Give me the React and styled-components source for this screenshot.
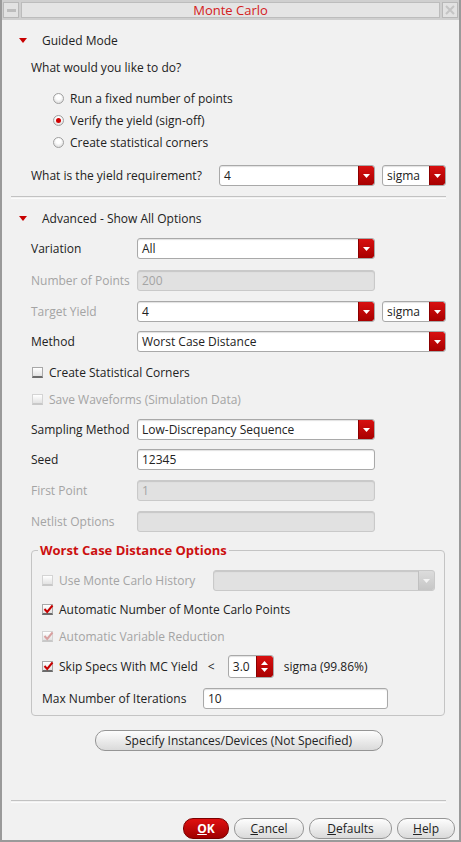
import React from 'react'
import styled, { createGlobalStyle } from 'styled-components'

const GlobalStyle = createGlobalStyle`
  html, body {
    margin: 0;
    padding: 0;
    background: #efefef;
  }
  body {
    font-family: "Open Sans", "DejaVu Sans", sans-serif;
    font-size: 12px;
    color: #222;
  }
`

const Window = styled.div`
  width: 461px;
  height: 842px;
  box-sizing: border-box;
  border: 1px solid #9a9a9a;
  border-width: 0 2px 2px 2px;
  background: #f1f1f1;
  display: flex;
  flex-direction: column;
  overflow: hidden;
`

const TitleBar = styled.div`
  height: 20px;
  flex: none;
  display: flex;
  align-items: stretch;
  gap: 2px;
  padding: 2px 1px 2px 1px;
  box-sizing: border-box;
  background: #cfcfcf;
`

const FrameButton = styled.div`
  width: 16px;
  box-sizing: border-box;
  border: 1px solid #b8b8b8;
  background: #e2e2e2;
  display: flex;
  align-items: center;
  justify-content: center;
`

const TitleText = styled.div`
  flex: 1;
  border: 1px solid #bcbcbc;
  background: #e4e4e4;
  color: #d42020;
  font-size: 13px;
  display: flex;
  align-items: center;
  justify-content: center;
  line-height: 1;
`

const Content = styled.div`
  flex: 1;
  display: flex;
  flex-direction: column;
  padding: 0 13px 0 9px;
`

const Row = styled.div`
  display: flex;
  align-items: center;
  height: ${p => p.$h || 21}px;
  margin-top: ${p => p.$mt || 0}px;
  padding-left: ${p => p.$indent ?? 20}px;
  flex: none;
  color: ${p => (p.$disabled ? '#a4a4a4' : '#222')};
  white-space: nowrap;
`

const HeaderRow = styled(Row)`
  padding-left: 8px;
  gap: 15px;
`

const Label = styled.div`
  width: ${p => p.$w || 106}px;
  flex: none;
  color: ${p => (p.$disabled ? '#a4a4a4' : '#222')};
`

const Separator = styled.div`
  height: 1px;
  flex: none;
  margin-top: ${p => p.$mt || 0}px;
  border-top: 1px solid #c2c2c2;
  border-bottom: 1px solid #fbfbfb;
`

const Field = styled.div`
  width: ${p => p.$w}px;
  height: ${p => p.$h || 21}px;
  box-sizing: border-box;
  flex: none;
  display: flex;
  align-items: stretch;
  border: 1px solid ${p => (p.$disabled ? '#c9c9c9' : '#a9a9a9')};
  border-radius: 3px;
  background: ${p => (p.$disabled ? '#e1e1e1' : '#fff')};
  box-shadow: inset 0 1px 1px rgba(0, 0, 0, 0.12);
  margin-left: ${p => p.$ml || 0}px;
  overflow: hidden;
`

const FieldText = styled.div`
  flex: 1;
  display: flex;
  align-items: center;
  padding-left: 4px;
  color: ${p => (p.$disabled ? '#a4a4a4' : '#222')};
`

const ArrowBox = styled.div`
  width: ${p => p.$w || 15}px;
  flex: none;
  display: flex;
  align-items: center;
  justify-content: center;
  flex-direction: column;
  gap: 3px;
  background: ${p =>
    p.$disabled
      ? 'linear-gradient(#dcdcdc, #c6c6c6)'
      : 'linear-gradient(#d81010, #a80000)'};
  border-left: 1px solid ${p => (p.$disabled ? '#c0c0c0' : '#8a0000')};
  border-radius: 0 2px 2px 0;
`

const Tri = ({ up, color = '#fff' }) => (
  <svg width="7" height="4" viewBox="0 0 7 4">
    <path d={up ? 'M0 4 L3.5 0 L7 4 Z' : 'M0 0 L7 0 L3.5 4 Z'} fill={color} />
  </svg>
)

function Combo({ w, value, disabled, ml }) {
  return (
    <Field $w={w} $disabled={disabled} $ml={ml}>
      <FieldText $disabled={disabled}>{value}</FieldText>
      <ArrowBox $disabled={disabled}>
        <Tri color={disabled ? '#f4f4f4' : '#fff'} />
      </ArrowBox>
    </Field>
  )
}

function TextField({ w, value, disabled, ml }) {
  return (
    <Field $w={w} $disabled={disabled} $ml={ml}>
      <FieldText $disabled={disabled}>{value}</FieldText>
    </Field>
  )
}

function SpinBox({ value }) {
  return (
    <Field $w={46} $h={23}>
      <FieldText>{value}</FieldText>
      <ArrowBox $w={16}>
        <Tri up />
        <Tri />
      </ArrowBox>
    </Field>
  )
}

const RadioCircle = styled.div`
  width: 11px;
  height: 11px;
  box-sizing: border-box;
  border-radius: 50%;
  border: 1px solid #a0a0a0;
  background: radial-gradient(circle at 50% 35%, #ffffff 30%, #d2d2d2 100%);
  display: flex;
  align-items: center;
  justify-content: center;
  margin-left: 22px;
  margin-right: 6px;
  &::after {
    content: '';
    width: 5px;
    height: 5px;
    border-radius: 50%;
    background: #d00000;
    display: ${p => (p.$on ? 'block' : 'none')};
  }
`

const Box = styled.div`
  width: 11px;
  height: 11px;
  box-sizing: border-box;
  flex: none;
  border: 1px solid ${p => (p.$disabled ? '#d4d4d4' : '#a8a8a8')};
  border-bottom: 2px solid ${p => (p.$disabled ? '#c8c8c8' : '#6c6c6c')};
  background: linear-gradient(#ffffff, #e2e2e2);
  margin-right: 6px;
  position: relative;
  svg {
    position: absolute;
    left: 0;
    top: -1px;
  }
`

function Check({ on, disabled }) {
  return (
    <Box $disabled={disabled}>
      {on && (
        <svg width="11" height="10" viewBox="0 0 11 10">
          <path
            d="M1.5 5 L4.2 8 L9.5 1.5"
            stroke={disabled ? '#d8a0a0' : '#c80000'}
            strokeWidth="2"
            fill="none"
          />
        </svg>
      )}
    </Box>
  )
}

const Group = styled.fieldset`
  margin: ${p => p.$mt}px 1px 0 20px;
  padding: 0 0 6px 10px;
  min-width: 0;
  border: 1px solid #c4c4c4;
  border-radius: 4px;
  flex: none;
  display: flex;
  flex-direction: column;
`

const Legend = styled.legend`
  margin-left: -4px;
  padding: 0 2px;
  height: 17px;
  line-height: 17px;
  font-size: 13px;
  font-weight: 700;
  color: #cc1010;
`

const Lt = styled.span`
  width: 30px;
  flex: none;
  padding-left: 10px;
  box-sizing: border-box;
`

const Unit = styled.span`
  margin-left: 10px;
`

const Pill = styled.button`
  height: 21px;
  width: ${p => p.$w}px;
  box-sizing: border-box;
  border: 1px solid ${p => (p.$primary ? '#7a0000' : '#959595')};
  border-radius: 10px;
  background: ${p =>
    p.$primary
      ? 'linear-gradient(#e01010, #a00000)'
      : 'linear-gradient(#fdfdfd, #dadada)'};
  color: ${p => (p.$primary ? '#fff' : '#222')};
  font-family: inherit;
  font-size: 12px;
  font-weight: ${p => (p.$primary ? 700 : 400)};
  padding: 0;
  flex: none;
  u {
    text-decoration: underline;
  }
`

const CenterRow = styled.div`
  display: flex;
  justify-content: center;
  margin-top: ${p => p.$mt}px;
  padding-left: 20px;
  flex: none;
`

const ButtonBar = styled.div`
  display: flex;
  justify-content: flex-end;
  gap: 5px;
  margin-top: ${p => p.$mt}px;
  margin-right: -9px;
  flex: none;
`

function SectionHeader({ children, mt }) {
  return (
    <HeaderRow $mt={mt} $h={22}>
      <svg width="8" height="5" viewBox="0 0 8 5">
        <path d="M0 0 L8 0 L4 5 Z" fill="#c80000" />
      </svg>
      <span>{children}</span>
    </HeaderRow>
  )
}

export default function App() {
  return (
    <>
      <GlobalStyle />
      <Window>
        <TitleBar>
          <FrameButton>
            <svg width="9" height="3" viewBox="0 0 9 3">
              <rect width="9" height="3" fill="#bdbdbd" />
            </svg>
          </FrameButton>
          <TitleText>Monte Carlo</TitleText>
          <FrameButton>
            <svg width="10" height="10" viewBox="0 0 10 10">
              <path d="M1 1 L9 9 M9 1 L1 9" stroke="#c4c4c4" strokeWidth="2" />
            </svg>
          </FrameButton>
        </TitleBar>
        <Content>
          <SectionHeader mt={9}>Guided Mode</SectionHeader>
          <Row $mt={5} $h={22}>What would you like to do?</Row>
          <Row $mt={9} $h={22}>
            <RadioCircle />Run a fixed number of points
          </Row>
          <Row $h={22}>
            <RadioCircle $on />Verify the yield (sign-off)
          </Row>
          <Row $h={22}>
            <RadioCircle />Create statistical corners
          </Row>
          <Row $mt={12}>
            <Label $w={188}>What is the yield requirement?</Label>
            <Combo w={156} value="4" />
            <Combo w={64} value="sigma" ml={7} />
          </Row>
          <Separator $mt={10} />
          <SectionHeader mt={8}>Advanced - Show All Options</SectionHeader>
          <Row $mt={9}>
            <Label>Variation</Label>
            <Combo w={238} value="All" />
          </Row>
          <Row $mt={11}>
            <Label $disabled>Number of Points</Label>
            <TextField w={238} value="200" disabled />
          </Row>
          <Row $mt={10}>
            <Label $disabled>Target Yield</Label>
            <Combo w={238} value="4" />
            <Combo w={64} value="sigma" ml={7} />
          </Row>
          <Row $mt={9}>
            <Label>Method</Label>
            <Combo w={309} value="Worst Case Distance" />
          </Row>
          <Row $mt={9} $h={22} $indent={21}>
            <Check />Create Statistical Corners
          </Row>
          <Row $mt={5} $h={22} $indent={21} $disabled>
            <Check disabled />Save Waveforms (Simulation Data)
          </Row>
          <Row $mt={9}>
            <Label>Sampling Method</Label>
            <Combo w={238} value="Low-Discrepancy Sequence" />
          </Row>
          <Row $mt={9}>
            <Label>Seed</Label>
            <TextField w={238} value="12345" />
          </Row>
          <Row $mt={10}>
            <Label $disabled>First Point</Label>
            <TextField w={238} value="1" disabled />
          </Row>
          <Row $mt={10}>
            <Label $disabled>Netlist Options</Label>
            <TextField w={238} value="" disabled />
          </Row>
          <Group $mt={10}>
            <Legend>Worst Case Distance Options</Legend>
            <Row $mt={11} $indent={0} $disabled>
              <Check disabled />
              <Label $w={154} $disabled>Use Monte Carlo History</Label>
              <Combo w={222} value="" disabled />
            </Row>
            <Row $mt={7} $h={22} $indent={0}>
              <Check on />Automatic Number of Monte Carlo Points
            </Row>
            <Row $mt={5} $h={22} $indent={0} $disabled>
              <Check on disabled />Automatic Variable Reduction
            </Row>
            <Row $mt={8} $h={23} $indent={0}>
              <Check on />
              <span>Skip Specs With MC Yield</span>
              <Lt>&lt;</Lt>
              <SpinBox value="3.0" />
              <Unit>sigma (99.86%)</Unit>
            </Row>
            <Row $mt={10} $indent={0}>
              <Label $w={161}>Max Number of Iterations</Label>
              <TextField w={185} value="10" />
            </Row>
          </Group>
          <CenterRow $mt={14}>
            <Pill $w={288}>Specify Instances/Devices (Not Specified)</Pill>
          </CenterRow>
          <Separator $mt={49} />
          <ButtonBar $mt={15}>
            <Pill $w={46} $primary><u>O</u>K</Pill>
            <Pill $w={70}><u>C</u>ancel</Pill>
            <Pill $w={83}><u>D</u>efaults</Pill>
            <Pill $w={58}><u>H</u>elp</Pill>
          </ButtonBar>
        </Content>
      </Window>
    </>
  )
}
